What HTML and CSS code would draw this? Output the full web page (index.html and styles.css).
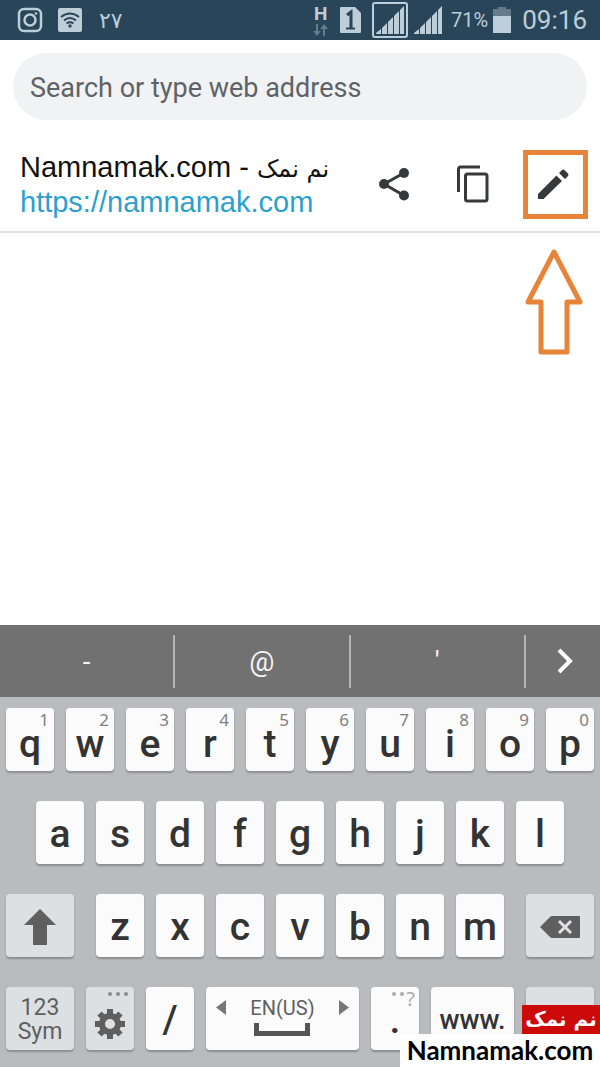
FILE: index.html
```html
<!DOCTYPE html>
<html lang="en">
<head>
    <meta charset="UTF-8">
    <meta name="viewport" content="width=device-width, initial-scale=1.0">
    <title>Namnamak.com - نم نمک</title>
    <link rel="stylesheet" href="styles.css">
</head>
<body>
    <!-- Status Bar -->
    <header class="status-bar">
        <svg width="26" height="26" viewBox="0 0 26 26" fill="none" stroke="#bdced9" stroke-width="2.5">
            <rect x="2" y="2" width="22" height="22" rx="5"/>
            <circle cx="13" cy="13" r="5.5"/>
            <circle cx="19" cy="6.5" r="1.3" fill="#bdced9" stroke="none"/>
        </svg>
        <svg width="26" height="26" viewBox="0 0 26 26" fill="none" stroke="#294559" stroke-width="2">
            <rect x="1" y="1" width="24" height="24" rx="2" fill="#bdced9" stroke="none"/>
            <path d="M4 10Q13 3 22 10M7 13.500Q13 8.500 19 13.500M9.500 16.500Q13 14 16.500 16.500"/>
            <circle cx="13" cy="19" r="1.700" fill="#294559" stroke="none"/>
        </svg>
        <span class="temperature">۲۷</span>

        <div class="status-right">
            <div class="network">
                <span>H</span>
                <svg width="15" height="12" viewBox="0 0 15 12" fill="#647c8c">
                    <path d="M3 0h2v7h3l-4 5-4-5h3zM10 12h2V5h3l-4-5-4 5h3z"/>
                </svg>
            </div>
            <svg class="sim" width="21" height="26" viewBox="0 0 21 26">
                <path d="M1 0h14l6 6v19a1 1 0 0 1-1 1H1a1 1 0 0 1-1-1V1a1 1 0 0 1 1-1z" fill="#bdced9"/>
                <path d="M7 8l4-3v17" fill="none" stroke="#294559" stroke-width="3"/>
                <path d="M6 21.500h9" stroke="#294559" stroke-width="2"/>
            </svg>
            <div class="signal-active">
                <svg width="28" height="28" viewBox="0 0 28 28" fill="#bdced9">
                    <path d="M0 28v-1l5-4v5zM6 28v-6l5-5v11zM12 28V16l5-5v17zM18 28V10l5-5v23zM24 28V4l4-4v28z"/>
                </svg>
            </div>
            <svg class="signal" width="28" height="28" viewBox="0 0 28 28" fill="#bdced9">
                <path d="M0 28v-1l5-4v5zM6 28v-6l5-5v11zM12 28V16l5-5v17zM18 28V10l5-5v23zM24 28V4l4-4v28z"/>
            </svg>
            <span class="battery-level">71%</span>
            <svg class="battery" width="18" height="26" viewBox="0 0 18 26">
                <path d="M5 0h8v2h5v7H0V2h5z" fill="#647c8c"/>
                <path d="M0 9h18v17H0z" fill="#bdced9"/>
            </svg>
            <time class="clock">09:16</time>
        </div>
    </header>

    <!-- Page Info -->
    <main class="content">
        <div class="search">
            <input type="text" class="search-box" placeholder="Search or type web address" aria-label="Search or type web address">
        </div>

        <div class="page-row">
            <div class="page-info">
                <div class="page-title">Namnamak.com - <span class="persian" lang="fa">نم نمک</span></div>
                <a class="page-url" href="https://namnamak.com">https://namnamak.com</a>
            </div>
            <div class="actions">
                <button type="button" class="action" aria-label="Share">
                    <svg width="40" height="40" viewBox="0 0 40 40" fill="#35393c">
                        <path d="M30 8L10 19l20 11.500" fill="none" stroke="#35393c" stroke-width="3"/>
                        <circle cx="30" cy="8" r="5"/>
                        <circle cx="10" cy="19" r="5"/>
                        <circle cx="30" cy="30.500" r="5"/>
                    </svg>
                </button>
                <button type="button" class="action" aria-label="Copy">
                    <svg width="40" height="40" viewBox="0 0 40 40" fill="none" stroke="#35393c" stroke-width="3">
                        <path d="M3.500 27V4a2 2 0 0 1 2-2H25"/>
                        <rect x="10.500" y="9" width="21.500" height="27" rx="2"/>
                    </svg>
                </button>
                <button type="button" class="action action-edit" aria-label="Edit">
                    <svg width="40" height="40" viewBox="0 0 40 40" fill="#35393c">
                        <path d="M2 34v-5L20.500 10.500l5.500 5.500L7.500 34zM23 8l3-3q1-1 2.500 0l3.500 3.500q1 1.500 0 2.500l-3 3z"/>
                    </svg>
                    <!-- Pointer under the edit button -->
                    <svg class="pointer" width="60" height="110" viewBox="0 0 60 110" fill="none" stroke="#e8833a" stroke-width="5" stroke-linejoin="round">
                        <path d="M30 7l26 50H43v50H17V57H4z"/>
                    </svg>
                </button>
            </div>
        </div>
    </main>

    <!-- Keyboard -->
    <section class="keyboard" aria-label="Keyboard">
        <div class="suggestions">
            <button type="button">-</button>
            <button type="button">@</button>
            <button type="button">'</button>
            <button type="button" class="more" aria-label="More">
                <svg width="16" height="26" viewBox="0 0 16 26" fill="none" stroke="#fff" stroke-width="4">
                    <path d="M2 2l11 11L2 24"/>
                </svg>
            </button>
        </div>

        <div class="keys">
            <div class="key-row key-row-top">
                <button type="button" class="key">q<span class="hint">1</span></button>
                <button type="button" class="key">w<span class="hint">2</span></button>
                <button type="button" class="key">e<span class="hint">3</span></button>
                <button type="button" class="key">r<span class="hint">4</span></button>
                <button type="button" class="key">t<span class="hint">5</span></button>
                <button type="button" class="key">y<span class="hint">6</span></button>
                <button type="button" class="key">u<span class="hint">7</span></button>
                <button type="button" class="key">i<span class="hint">8</span></button>
                <button type="button" class="key">o<span class="hint">9</span></button>
                <button type="button" class="key">p<span class="hint">0</span></button>
            </div>
            <div class="key-row key-row-middle">
                <button type="button" class="key">a</button>
                <button type="button" class="key">s</button>
                <button type="button" class="key">d</button>
                <button type="button" class="key">f</button>
                <button type="button" class="key">g</button>
                <button type="button" class="key">h</button>
                <button type="button" class="key">j</button>
                <button type="button" class="key">k</button>
                <button type="button" class="key">l</button>
            </div>
            <div class="key-row">
                <button type="button" class="key key-gray key-wide key-shift" aria-label="Shift">
                    <svg width="32" height="36" viewBox="0 0 32 36" fill="#5f5f5f">
                        <path d="M16 0l16 16h-9v20H9V16H0z"/>
                    </svg>
                </button>
                <button type="button" class="key">z</button>
                <button type="button" class="key">x</button>
                <button type="button" class="key">c</button>
                <button type="button" class="key">v</button>
                <button type="button" class="key">b</button>
                <button type="button" class="key">n</button>
                <button type="button" class="key">m</button>
                <button type="button" class="key key-gray key-wide key-delete" aria-label="Delete">
                    <svg width="40" height="22" viewBox="0 0 40 22">
                        <path d="M0 11L10 1q1-1 2-1h27q1 0 1 1v20q0 1-1 1H12q-1 0-2-1z" fill="#5f5f5f"/>
                        <path d="M19 5l12 12M31 5L19 17" stroke="#dce0e3" stroke-width="3"/>
                    </svg>
                </button>
            </div>
            <div class="key-row">
                <button type="button" class="key key-gray key-wide key-sym">123<br>Sym</button>
                <button type="button" class="key key-gray key-settings" aria-label="Settings">
                    <svg class="dots" width="20" height="4" viewBox="0 0 20 4" fill="#8c8c8c">
                        <circle cx="2" cy="2" r="2"/><circle cx="10" cy="2" r="2"/><circle cx="18" cy="2" r="2"/>
                    </svg>
                    <svg width="30" height="30" viewBox="-15 -15 30 30" stroke="#5f5f5f">
                        <path d="M0-15V-8M0 8V15M-15 0H-8M8 0H15M-10.500-10.500L-6-6M6 6l4.500 4.500M10.500-10.500L6-6M-6 6l-4.500 4.500" stroke-width="6"/>
                        <circle r="8" fill="none" stroke-width="6"/>
                    </svg>
                </button>
                <button type="button" class="key">/</button>
                <button type="button" class="key key-space" aria-label="Space">
                    <svg class="arrow" width="10" height="15" viewBox="0 0 10 15" fill="#777"><path d="M10 0v15L0 7.500z"/></svg>
                    <span class="space-label">
                        EN(US)
                        <svg width="56" height="13" viewBox="0 0 56 13" fill="none" stroke="#555" stroke-width="5">
                            <path d="M2.500 0v10.500h51V0"/>
                        </svg>
                    </span>
                    <svg class="arrow" width="10" height="15" viewBox="0 0 10 15" fill="#777"><path d="M0 0v15l10-7.500z"/></svg>
                </button>
                <button type="button" class="key key-dot">.<span class="hint hint-light"><svg width="12" height="4" viewBox="0 0 12 4" fill="#aaa"><circle cx="2" cy="2" r="2"/><circle cx="10" cy="2" r="2"/></svg>?</span></button>
                <button type="button" class="key key-www">www.</button>
                <button type="button" class="key key-gray key-wide" aria-label="Enter"></button>
            </div>
        </div>
    </section>

    <!-- Site Badge -->
    <div class="badge">
        <div class="badge-persian" lang="fa">نم نمک</div>
        <div class="badge-domain">Namnamak.com</div>
    </div>
</body>
</html>
```
FILE: styles.css
```css
/* Base Styles */
* {
    box-sizing: border-box;
}

body {
    margin: 0;
    min-height: 100vh;
    display: flex;
    flex-direction: column;
    background: #fff;
    font-family: Roboto, sans-serif;
}

button {
    margin: 0;
    padding: 0;
    border: none;
    background: none;
    font-family: inherit;
    cursor: pointer;
}

svg {
    display: block;
    flex-shrink: 0;
}

/* Status Bar */
.status-bar {
    display: flex;
    align-items: center;
    gap: 14px;
    height: 40px;
    padding: 0 13px 0 17px;
    background: #294559;
    color: #bdced9;
}

.temperature {
    margin-left: 2px;
    font-family: "DejaVu Sans", sans-serif;
    font-size: 22px;
}

.status-right {
    display: flex;
    align-items: center;
    margin-left: auto;
}

.network {
    display: flex;
    flex-direction: column;
    align-items: center;
    gap: 2px;
    margin-right: 12px;
    font-size: 19px;
    font-weight: 700;
    line-height: 17px;
}

.sim {
    margin-right: 11px;
}

.signal-active {
    padding: 2px;
    border: 2px solid #bdced9;
    border-radius: 3px;
    margin-right: 6px;
}

.signal {
    margin-right: 9px;
}

.battery-level {
    margin-right: 5px;
    font-size: 20px;
}

.battery {
    margin-right: 11px;
}

.clock {
    font-size: 26px;
}

/* Page Info */
.content {
    flex: 1;
}

.search {
    padding: 13px 13px 0;
}

.search-box {
    display: block;
    width: 100%;
    height: 67px;
    padding: 2px 17px 0;
    border: none;
    border-radius: 34px;
    background: #f0f2f4;
    font-family: inherit;
    font-size: 27px;
    color: #5f6368;
}

.search-box::placeholder {
    color: #5f6368;
    opacity: 1;
}

.page-row {
    display: flex;
    align-items: center;
    justify-content: space-between;
    padding: 30px 12px 12px 20px;
    border-bottom: 2px solid #dedfe0;
}

.page-info {
    font-family: "Liberation Sans", Arial, sans-serif;
    font-size: 29px;
    line-height: 33px;
    white-space: nowrap;
}

.page-title {
    color: #111;
}

.persian {
    font-family: "DejaVu Sans", sans-serif;
    font-size: 24px;
}

.page-url {
    color: #2ba0cf;
    text-decoration: none;
}

.actions {
    display: flex;
    gap: 16px;
}

.action {
    position: relative;
    display: flex;
    align-items: center;
    justify-content: center;
    width: 65px;
    height: 69px;
}

.action-edit {
    border: 5px solid #e8833a;
}

.pointer {
    position: absolute;
    top: 90px;
    left: -4px;
}

/* Suggestion Bar */
.suggestions {
    display: flex;
    align-items: center;
    height: 72px;
    background: #717171;
}

.suggestions button {
    flex: 7;
    height: 53px;
    border-right: 2px solid #b5b5b5;
    font-size: 28px;
    color: #f4f4f4;
}

.suggestions .more {
    display: flex;
    align-items: center;
    justify-content: center;
    flex: 3;
    border-right: none;
}

.more svg {
    margin-left: 5px;
}

/* Keys */
.keys {
    display: flex;
    flex-direction: column;
    gap: 30px;
    padding: 11px 6px 17px;
    background: #b9bbbf;
}

.key-row {
    display: flex;
    gap: 12px;
}

.key-row-middle {
    padding: 0 30px;
}

.key {
    position: relative;
    display: flex;
    align-items: center;
    justify-content: center;
    flex: 48 1 0;
    min-width: 0;
    height: 63px;
    padding-top: 2px;
    border-radius: 4px;
    background: #fbfbfb;
    box-shadow: 0 2px 2px rgba(0, 0, 0, 0.25);
    color: #333;
    font-size: 39px;
    font-weight: 500;
    line-height: 40px;
}

.key-row-top .key {
    padding-top: 8px;
}

.key-gray {
    background: #dce0e3;
    color: #5f5f5f;
}

.key-wide {
    flex-grow: 68;
}

.key-shift {
    margin-right: 10px;
}

.key-delete {
    margin-left: 10px;
}

.hint {
    position: absolute;
    top: 2px;
    right: 5px;
    color: #808080;
    font-family: "Noto Sans", sans-serif;
    font-size: 17px;
    font-weight: 400;
    line-height: 20px;
}

.hint-light {
    display: flex;
    gap: 2px;
    right: 4px;
    color: #aaa;
    font-size: 20px;
}

.hint-light svg {
    margin-top: 3px;
}

.key-sym {
    font-size: 23px;
    font-weight: 400;
    line-height: 24px;
}

.key-settings {
    align-items: flex-end;
    padding-bottom: 11px;
}

.dots {
    position: absolute;
    top: 5px;
    right: 6px;
}

.key-space {
    flex-grow: 153;
    align-items: flex-start;
    justify-content: space-between;
    padding-top: 13px;
}

.arrow {
    margin: 0 10px;
}

.space-label {
    display: flex;
    flex-direction: column;
    align-items: center;
    gap: 6px;
    font-size: 20px;
    font-weight: 400;
    line-height: 17px;
    color: #5f5f5f;
}

.key-www {
    flex-grow: 83;
    font-size: 27px;
}

/* Site Badge */
.badge {
    position: fixed;
    right: 0;
    bottom: 0;
    display: flex;
    flex-direction: column;
    align-items: flex-end;
}

.badge-persian {
    width: 78px;
    background: #cc0a0a;
    color: #fff;
    font-family: "DejaVu Sans", sans-serif;
    font-size: 20px;
    font-weight: 700;
    line-height: 29px;
    text-align: center;
    white-space: nowrap;
}

.badge-domain {
    width: 200px;
    background: #fff;
    color: #000;
    font-family: Lato, sans-serif;
    font-size: 26px;
    font-weight: 700;
    line-height: 33px;
    text-align: center;
}
```
